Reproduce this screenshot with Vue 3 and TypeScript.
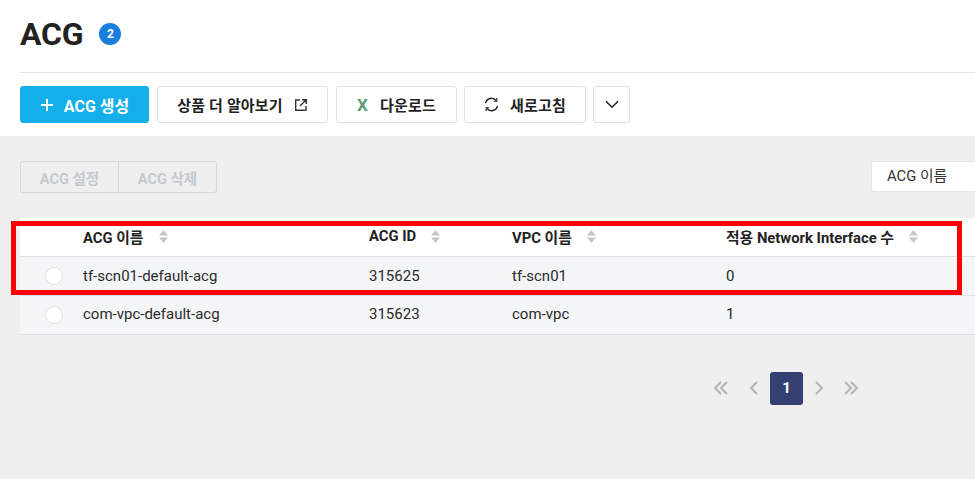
<script setup lang="ts">
interface Row { name: string; id: string; vpc: string; count: string }
const rows: Row[] = [
  { name: 'tf-scn01-default-acg', id: '315625', vpc: 'tf-scn01', count: '0' },
  { name: 'com-vpc-default-acg', id: '315623', vpc: 'com-vpc', count: '1' },
]
const headers: string[] = ['ACG 이름', 'ACG ID', 'VPC 이름', '적용 Network Interface 수']
</script>

<template>
  <div class="page">
    <header class="top">
      <div class="title-row">
        <h1>ACG</h1>
        <span class="badge">2</span>
      </div>
      <div class="toolbar">
        <button class="btn primary">
          <svg width="14" height="14" viewBox="0 0 14 14"><path d="M7 1v12M1 7h12" stroke="#fff" stroke-width="2" fill="none" /></svg>
          <span>ACG 생성</span>
        </button>
        <button class="btn learn">
          <span>상품 더 알아보기</span>
          <svg width="14" height="14" viewBox="0 0 14 14" fill="none" stroke="#333" stroke-width="1.4"><path d="M6 2H1.7v10.3H12V8M8 1.7h4.3V6M12.2 1.8 6 8" /></svg>
        </button>
        <button class="btn download">
          <span class="x">X</span>
          <span>다운로드</span>
        </button>
        <button class="btn refresh">
          <svg width="15" height="15" viewBox="0 0 15 15" fill="none" stroke="#222" stroke-width="1.4"><path d="M1.6 6.2A6 6 0 0 1 12.2 3.6M13.4 8.8A6 6 0 0 1 2.8 11.4" /><path d="M12.8 1v3.2H9.8M2.2 14v-3.2h3" stroke-width="1.1" /></svg>
          <span>새로고침</span>
        </button>
        <button class="btn more" aria-label="더보기">
          <svg width="14" height="9" viewBox="0 0 14 9" fill="none" stroke="#222" stroke-width="1.5"><path d="M1 1.2 7 7.2 13 1.2" /></svg>
        </button>
      </div>
    </header>

    <main class="content">
      <div class="filters">
        <div class="group">
          <button class="ghost">ACG 설정</button>
          <button class="ghost">ACG 삭제</button>
        </div>
        <div class="select">ACG 이름</div>
      </div>

      <div class="table">
        <div class="row head">
          <div></div>
          <div v-for="h in headers" :key="h" class="th">
            <span>{{ h }}</span>
            <svg width="9" height="13" viewBox="0 0 10 13" fill="#c6c6c6" preserveAspectRatio="none"><path d="M5 0 10 5.6H0ZM0 7.4H10L5 13Z" /></svg>
          </div>
        </div>
        <div v-for="r in rows" :key="r.id" class="row body">
          <div class="radio-cell"><span class="radio"></span></div>
          <div>{{ r.name }}</div>
          <div>{{ r.id }}</div>
          <div>{{ r.vpc }}</div>
          <div>{{ r.count }}</div>
        </div>
        <div class="highlight"></div>
      </div>

      <nav class="pager">
        <svg width="16" height="14" viewBox="0 0 16 14" fill="none" stroke="#b5b5b5" stroke-width="2"><path d="M8 1 2 7l6 6M14 1 8 7l6 6" /></svg>
        <svg class="one" width="10" height="14" viewBox="0 0 10 14" fill="none" stroke="#b5b5b5" stroke-width="2"><path d="M8 1 2 7l6 6" /></svg>
        <span class="current">1</span>
        <svg class="one" width="10" height="14" viewBox="0 0 10 14" fill="none" stroke="#b5b5b5" stroke-width="2"><path d="M2 1l6 6-6 6" /></svg>
        <svg width="16" height="14" viewBox="0 0 16 14" fill="none" stroke="#b5b5b5" stroke-width="2"><path d="M2 1l6 6-6 6M8 1l6 6-6 6" /></svg>
      </nav>
    </main>
  </div>
</template>

<style scoped>
.page {
  width: 975px;
  height: 479px;
  overflow: hidden;
  background: #efefef;
  font-family: Roboto, "Noto Sans CJK KR", sans-serif;
  color: #222;
}
.top {
  background: #fff;
  height: 136px;
  padding-left: 20px;
  box-sizing: border-box;
}
.title-row {
  height: 73px;
  box-sizing: border-box;
  padding-bottom: 5px;
  display: flex;
  align-items: center;
  gap: 16px;
  border-bottom: 1px solid #e2e2e2;
}
h1 {
  margin: 0;
  font-size: 32px;
  font-weight: 700;
  line-height: 40px;
  letter-spacing: -0.2px;
  color: #222;
}
.badge {
  width: 22px;
  height: 22px;
  border-radius: 50%;
  background: #1a7fdc;
  color: #fff;
  font-size: 12px;
  font-weight: 700;
  display: flex;
  align-items: center;
  justify-content: center;
}
.toolbar {
  display: flex;
  margin-top: 13px;
  gap: 8px;
}
.btn {
  height: 37px;
  box-sizing: border-box;
  border: 1px solid #e0e0e0;
  border-radius: 3px;
  background: #fff;
  display: flex;
  align-items: center;
  justify-content: center;
  padding: 0;
  font: 700 15px Roboto, "Noto Sans CJK KR", sans-serif;
  letter-spacing: 0.15px;
  color: #222;
}
.primary { width: 129px; gap: 10px; font-size: 16px; letter-spacing: 0; background: #14aeea; border-color: #14aeea; color: #fff; }
.learn { width: 171px; gap: 11px; }
.download { width: 121px; gap: 12px; }
.refresh { width: 122px; gap: 11px; margin-left: -1px; }
.more { width: 37px; margin-left: -1px; }
.x { color: #5b9c78; font-size: 17px; font-weight: 700; }
.content {
  padding-left: 20px;
}
.filters {
  display: flex;
  justify-content: space-between;
  align-items: flex-start;
  padding-top: 25px;
  height: 82px;
  box-sizing: border-box;
}
.group {
  display: flex;
  height: 32px;
  border: 1px solid #d5d9de;
  border-radius: 3px;
  box-sizing: border-box;
}
.ghost {
  width: 97px;
  border: 0;
  background: transparent;
  padding: 0;
  font: 700 14.5px Roboto, "Noto Sans CJK KR", sans-serif;
  color: #c4c9cf;
}
.ghost + .ghost { border-left: 1px solid #d5d9de; width: 98px; }
.select {
  width: 104px;
  height: 31px;
  box-sizing: border-box;
  background: #fff;
  border: 1px solid #e6e6e6;
  border-right: 0;
  border-radius: 3px 0 0 3px;
  padding-left: 15px;
  font-size: 14.8px;
  line-height: 29px;
  color: #333;
}
.table {
  position: relative;
  width: 955px;
  background: #fff;
  border-radius: 2px 0 0 2px;
}
.row {
  display: grid;
  grid-template-columns: 63px 286px 143px 214px 1fr;
  align-items: center;
  font-size: 15px;
  border-bottom: 1px solid #dfe1e4;
  box-sizing: border-box;
}
.head { height: 38.8px; font-size: 14.8px; font-weight: 700; background: #fff; }
.body { height: 38.8px; background: #f4f5f7; color: #2b2b2b; }
.body:nth-child(3) { height: 39.2px; padding-bottom: 1px; }
.body:nth-child(3) .radio-cell { margin-top: 2px; }
.th { display: flex; align-items: center; gap: 15px; margin-top: -1px; }
.radio-cell { display: flex; justify-content: center; padding-left: 5px; }
.radio {
  width: 18px;
  height: 18px;
  box-sizing: border-box;
  border-radius: 50%;
  background: #fff;
  border: 1px solid #e2e2e2;
}
.highlight {
  position: absolute;
  left: -9px;
  top: 3px;
  width: 951px;
  height: 74px;
  box-sizing: border-box;
  border: 5px solid #f00;
  pointer-events: none;
}
.pager {
  display: flex;
  align-items: center;
  margin: 37.2px 0 0 693px;
  height: 33px;
}
.current {
  width: 33px;
  height: 33px;
  margin: 0 11px;
  border-radius: 3px;
  background: #34406f;
  color: #fff;
  font-size: 15px;
  font-weight: 700;
  display: flex;
  align-items: center;
  justify-content: center;
}
.one { margin-left: 20px; }
.current + .one { margin-left: 0; margin-right: 19px; }
</style>
